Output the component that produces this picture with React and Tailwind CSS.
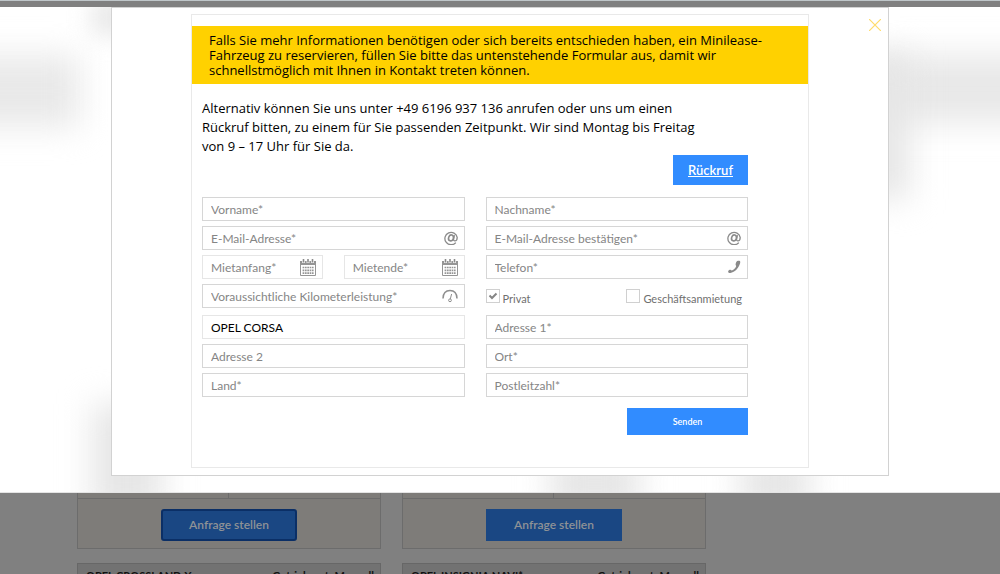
function AtIcon() {
  return (
    <svg viewBox="0 0 14 14" className="size-3.5" fill="none" stroke="#8a8a8a" aria-hidden="true">
      <path d="M11.8 11.6A6.200 6.200 0 1 1 13.200 6.400c0 2-.9 3.400-2.300 3.400-1 0-1.500-.7-1.300-1.700l.8-4" strokeWidth="1.300" />
      <ellipse cx="7" cy="6.900" rx="2.400" ry="3" transform="rotate(18 7 6.900)" strokeWidth="1.600" />
    </svg>
  );
}

function CalendarIcon() {
  return (
    <svg viewBox="0 0 16 17" className="h-[17px] w-4" fill="none" aria-hidden="true">
      <path d="M.5 2.500h15v14H.5z" stroke="#959595" />
      <path d="M0 2h16v4H0z" fill="#959595" />
      <path d="M3.500 0v4M8 0v4M12.500 0v4" stroke="#fff" strokeWidth="2.800" />
      <path d="M3.500 0v3.500M8 0v3.500M12.500 0v3.500" stroke="#8a8a8a" strokeWidth="1.600" />
      <path
        d="M2.600 8.500h11M2.600 11.300h11M2.600 14.100h11"
        stroke="#959595"
        strokeWidth="1.700"
        strokeDasharray="1.700 .65"
      />
    </svg>
  );
}

function PhoneIcon() {
  return (
    <svg viewBox="0 0 14 14" className="size-3.5" aria-hidden="true">
      <path
        d="M10.200 1.100c.8-.4 2-.6 2.700-.2.5.3.4 1.700.1 2.700-.6 2-1.700 4.200-3.400 6-1.600 1.700-4.300 3.300-6.300 3.500-1 .1-2.200-.6-2.200-1.300 0-.8.8-1.700 1.700-2 .8-.3 1.300.7 2 .6 1.400-.4 3.700-2.600 4.300-4 .3-.7-.7-1.200-.5-2.100.2-1.200.8-2.800 1.600-3.200z"
        fill="#8a8a8a"
      />
    </svg>
  );
}

function GaugeIcon() {
  return (
    <svg viewBox="0 0 16 14" className="h-3.5 w-4" fill="none" stroke="#8f8f8f" aria-hidden="true">
      <path d="M1 9.500C1.200 4.500 4 1.600 8 1.600s6.800 2.900 7 7.900" strokeWidth="1.500" />
      <path d="M9.600 5 8.300 10" />
      <circle cx="8" cy="11.300" r="1.400" />
    </svg>
  );
}

function Field({ label, icon, soft, ...props }) {
  return (
    <div
      className={`flex h-6 min-w-0 items-center border bg-white pr-1.5 pl-2 ${soft ? "border-[#e6e6e6]" : "border-[#d6d6d6]"}`}
    >
      <input
        type="text"
        aria-label={label}
        placeholder={label}
        className="w-full min-w-0 bg-transparent pt-0.5 text-[12px] text-black outline-none placeholder:text-[#858585]"
        {...props}
      />
      {icon && <span className="flex shrink-0">{icon}</span>}
    </div>
  );
}

function Check({ label, ...props }) {
  return (
    <label className="flex items-center gap-[3px] text-[11px] leading-4 text-[#6f6f6f]">
      <span className="relative flex">
        <input
          type="checkbox"
          className="peer size-3.5 appearance-none border border-[#d0d0d0] bg-white"
          {...props}
        />
        <svg
          viewBox="0 0 14 14"
          className="pointer-events-none absolute inset-0 hidden size-3.5 peer-checked:block"
          fill="none"
          stroke="#858585"
          strokeWidth="2"
          aria-hidden="true"
        >
          <path d="M3.500 6.500 6 9l4.500-4.500" />
        </svg>
      </span>
      <span className="pt-1.5">{label}</span>
    </label>
  );
}

function OfferFooter({ focused }) {
  return (
    <div className="h-14 border-x border-b border-[#6c6c6c] bg-[#7e7c79]">
      <div className="grid h-1.5 grid-cols-2 border-b border-[#6c6c6c]">
        <div className="border-r border-[#6c6c6c]" />
      </div>
      <div className="flex h-[49px] items-center justify-center pt-0.5">
        <button
          type="button"
          className={`h-8 w-[136px] bg-[#1a4783] text-[12px] font-semibold text-[#8f9296] ${focused ? "rounded-[3px] border-2 border-[#0b2f66]" : ""}`}
        >
          Anfrage stellen
        </button>
      </div>
    </div>
  );
}

function OfferHeader({ name }) {
  return (
    <div className="flex h-10 justify-between border border-[#676767] bg-[#727272] pt-1 pr-1.5 pl-2 text-[11px] leading-4 font-bold text-[#111111]">
      <span>{name}</span>
      <span>Getriebeart: Manuell</span>
    </div>
  );
}

function Haze() {
  return (
    <div className="absolute inset-0 overflow-hidden" aria-hidden="true">
      <div className="absolute top-12 -left-10 h-[72px] w-[120px] bg-[#e9e9e9] blur-lg" />
      <div className="absolute -top-2 left-[92px] h-9 w-12 bg-[#e8e8e8] blur-md" />
      <div className="absolute top-12 -right-10 h-[68px] w-[170px] bg-[#e8e8e8] blur-lg" />
      <div className="absolute top-12 right-[90px] h-36 w-12 bg-[#e6e6e6] blur-lg" />
      <div className="absolute -bottom-6 left-[92px] h-28 w-[70px] bg-[#e6e6e6] blur-lg" />
      <div className="absolute -bottom-4 left-[550px] h-12 w-[90px] bg-[#e4e4e4] blur-lg" />
      <div className="absolute -bottom-4 left-[740px] h-12 w-[70px] bg-[#e4e4e4] blur-lg" />
    </div>
  );
}

export default function App() {
  return (
    <div className="h-screen overflow-hidden bg-[#808080] font-[Lato,sans-serif]">
      <div className="h-[7px] border-t border-[#bfc6c9]" />

      <section className="relative border-b border-[#e4e4e4] bg-white pb-4">
        <Haze />
        <div
          role="dialog"
          className="relative mx-auto max-w-[778px] border border-[#d2d2d2] bg-white px-[79px] pt-1.5 pb-[7px]"
        >
          <button type="button" aria-label="Schließen" className="absolute top-[11px] right-[7px]">
            <svg viewBox="0 0 12 12" className="size-3" stroke="#ffdc6a" fill="none" aria-hidden="true">
              <path d="M0 0 12 12M12 0 0 12" strokeWidth="1.200" />
            </svg>
          </button>

          <div className="border border-[#e9e9e9] pt-[11px] pb-8">
            <p className="bg-[#ffd100] px-[17px] pt-[7px] pb-1.5 font-['Open_Sans',sans-serif] text-[13px] leading-[15px] font-medium text-black">
              Falls Sie mehr Informationen benötigen oder sich bereits entschieden haben, ein Minilease-
              <br />
              Fahrzeug zu reservieren, füllen Sie bitte das untenstehende Formular aus, damit wir
              <br />
              schnellstmöglich mit Ihnen in Kontakt treten können.
            </p>

            <div className="pr-[60px] pl-2.5">
              <p className="pt-[15px] font-['Open_Sans',sans-serif] text-[13px] leading-[19px] font-medium text-black">
                Alternativ können Sie uns unter +49 6196 937 136 anrufen oder uns um einen
                <br />
                Rückruf bitten, zu einem für Sie passenden Zeitpunkt. Wir sind Montag bis Freitag
                <br />
                von 9 – 17 Uhr für Sie da.
              </p>
              <div className="-mt-px flex justify-end">
                <a
                  href="#rueckruf"
                  className="w-[75px] bg-[#318cff] py-1.5 text-center text-[13px] leading-[18px] font-semibold text-white underline"
                >
                  Rückruf
                </a>
              </div>

              <form className="mt-3">
                <div className="grid grid-cols-2 gap-x-[21px] gap-y-[5px]">
                  <Field label="Vorname*" />
                  <Field label="Nachname*" />
                  <Field label="E-Mail-Adresse*" icon={<AtIcon />} />
                  <Field label="E-Mail-Adresse bestätigen*" icon={<AtIcon />} />
                  <div className="grid grid-cols-2 gap-[21px]">
                    <Field label="Mietanfang*" soft icon={<CalendarIcon />} />
                    <Field label="Mietende*" soft icon={<CalendarIcon />} />
                  </div>
                  <Field label="Telefon*" icon={<PhoneIcon />} />
                  <Field label="Voraussichtliche Kilometerleistung*" icon={<GaugeIcon />} />
                  <div className="flex items-center justify-between pr-1.5">
                    <Check label="Privat" defaultChecked />
                    <Check label="Geschäftsanmietung" />
                  </div>
                </div>
                <div className="mt-[7px] grid grid-cols-2 gap-x-[21px] gap-y-[5px]">
                  <Field label="Fahrzeug" soft defaultValue="OPEL CORSA" />
                  <Field label="Adresse 1*" />
                  <Field label="Adresse 2" />
                  <Field label="Ort*" />
                  <Field label="Land*" />
                  <Field label="Postleitzahl*" />
                </div>
                <div className="mt-[11px] flex justify-end">
                  <button type="submit" className="h-[27px] w-[121px] bg-[#318cff] text-[9px] font-semibold text-white">
                    Senden
                  </button>
                </div>
              </form>
            </div>
          </div>
        </div>
      </section>

      <main className="mx-[77px] grid max-w-[629px] grid-cols-2 gap-x-[21px] gap-y-3.5">
        <OfferFooter focused />
        <OfferFooter />
        <OfferHeader name="OPEL CROSSLAND X" />
        <OfferHeader name="OPEL INSIGNIA NAVI*" />
      </main>
    </div>
  );
}
